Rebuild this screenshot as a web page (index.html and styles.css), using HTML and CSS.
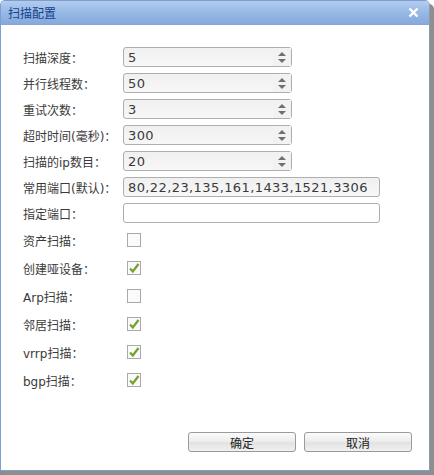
FILE: index.html
```html
<!DOCTYPE html>
<html lang="zh-CN">
<head>
    <meta charset="UTF-8">
    <title>扫描配置</title>
    <link rel="stylesheet" href="styles.css">
</head>
<body>
    <div class="window">
        <div class="window-header">
            <span class="window-title">扫描配置</span>
            <span class="window-close">
                <svg width="11" height="11" viewBox="0 0 11 11"><path d="M1.5 1.5 L9.5 9.5 M9.5 1.5 L1.5 9.5" stroke="#fff" stroke-width="2.4" fill="none"/></svg>
            </span>
        </div>
        <form class="window-body">
            <div class="fields">
                <div class="field"><label>扫描深度：</label><div class="spin"><input type="text" value="5"><span class="spin-btns"><i class="up"></i><i class="down"></i></span></div></div>
                <div class="field"><label>并行线程数：</label><div class="spin"><input type="text" value="50"><span class="spin-btns"><i class="up"></i><i class="down"></i></span></div></div>
                <div class="field"><label>重试次数：</label><div class="spin"><input type="text" value="3"><span class="spin-btns"><i class="up"></i><i class="down"></i></span></div></div>
                <div class="field"><label>超时时间(毫秒)：</label><div class="spin"><input type="text" value="300"><span class="spin-btns"><i class="up"></i><i class="down"></i></span></div></div>
                <div class="field"><label>扫描的ip数目：</label><div class="spin"><input type="text" value="20"><span class="spin-btns"><i class="up"></i><i class="down"></i></span></div></div>
                <div class="field"><label>常用端口(默认)：</label><input class="text wide" type="text" value="80,22,23,135,161,1433,1521,3306"></div>
                <div class="field"><label>指定端口：</label><input class="text wide plain" type="text" value=""></div>
            </div>
            <div class="checks">
                <div class="check-row"><label>资产扫描：</label><span class="check"></span></div>
                <div class="check-row"><label>创建哑设备：</label><span class="check checked"><svg width="12" height="12" viewBox="0 0 12 12"><path d="M2 6.5 L4.8 9.5 L10.5 2" stroke="#73a12a" stroke-width="2.2" fill="none"/></svg></span></div>
                <div class="check-row"><label>Arp扫描：</label><span class="check"></span></div>
                <div class="check-row"><label>邻居扫描：</label><span class="check checked"><svg width="12" height="12" viewBox="0 0 12 12"><path d="M2 6.5 L4.8 9.5 L10.5 2" stroke="#73a12a" stroke-width="2.2" fill="none"/></svg></span></div>
                <div class="check-row"><label>vrrp扫描：</label><span class="check checked"><svg width="12" height="12" viewBox="0 0 12 12"><path d="M2 6.5 L4.8 9.5 L10.5 2" stroke="#73a12a" stroke-width="2.2" fill="none"/></svg></span></div>
                <div class="check-row"><label>bgp扫描：</label><span class="check checked"><svg width="12" height="12" viewBox="0 0 12 12"><path d="M2 6.5 L4.8 9.5 L10.5 2" stroke="#73a12a" stroke-width="2.2" fill="none"/></svg></span></div>
            </div>
        </form>
        <div class="window-footer">
            <button type="button">确定</button>
            <button type="button">取消</button>
        </div>
    </div>
    <div class="behind">使用扫描&nbsp;&nbsp;&nbsp;不以仿秒)：</div>
</body>
</html>
```

FILE: styles.css
```css
body {
    margin: 0;
    padding: 0;
    background: #fff;
    font-family: "DejaVu Sans", "Noto Sans CJK SC", sans-serif;
    font-size: 12px;
    color: #333;
    overflow: hidden;
}

.window {
    box-sizing: border-box;
    width: 430px;
    height: 471px;
    display: flex;
    flex-direction: column;
    background: #fff;
    border: 1px solid #7d9fd0;
    border-right-color: #8a9bb4;
    border-radius: 5px 5px 0 0;
    box-shadow: 4px 4px 0 #8e8e8e;
    position: relative;
    z-index: 1;
}

.window-header {
    height: 23px;
    border-bottom: 1px solid #86a6d6;
    border-radius: 4px 4px 0 0;
    background: linear-gradient(#b2ccef, #98b9e5 50%, #86a9dc);
    display: flex;
    align-items: center;
    justify-content: space-between;
    padding: 0 10px 0 7px;
}

.window-title {
    font-family: "Noto Sans CJK SC", sans-serif;
    font-size: 12px;
    color: #15428b;
}

.window-close {
    display: flex;
    align-items: center;
}

.window-body {
    margin: 0;
    padding: 22px 0 0 22px;
}

.fields {
    display: flex;
    flex-direction: column;
    gap: 6px;
}

.field {
    display: flex;
    align-items: center;
    height: 20px;
}

.field label,
.check-row label {
    width: 100px;
    flex: none;
    color: #3a3a3a;
}

.spin {
    box-sizing: border-box;
    width: 169px;
    height: 20px;
    display: flex;
    border: 1px solid #aeaeae;
    border-radius: 3px;
    background: linear-gradient(#f0f0f0, #f7f7f7);
}

.spin input,
.text {
    box-sizing: border-box;
    border: none;
    outline: none;
    background: transparent;
    font-family: "DejaVu Sans", sans-serif;
    font-size: 13px;
    letter-spacing: 0.4px;
    color: #3a3a3a;
    padding: 0 0 0 4px;
    height: 18px;
}

.spin input {
    flex: 1;
    min-width: 0;
}

.spin-btns {
    width: 18px;
    display: flex;
    flex-direction: column;
    align-items: center;
    justify-content: center;
    gap: 3px;
    background: #f2f2f2;
}

.spin-btns i {
    width: 0;
    height: 0;
    border-left: 4px solid transparent;
    border-right: 4px solid transparent;
}

.spin-btns .up {
    border-bottom: 4px solid #707070;
}

.spin-btns .down {
    border-top: 4px solid #707070;
}

.text.wide {
    width: 257px;
    height: 20px;
    border: 1px solid #aeaeae;
    border-radius: 3px;
    background: linear-gradient(#f0f0f0, #f7f7f7);
}

.text.wide.plain {
    background: #fff;
}

.checks {
    margin-top: 3px;
    display: flex;
    flex-direction: column;
}

.check-row {
    height: 28px;
    display: flex;
    align-items: center;
}

.check {
    box-sizing: border-box;
    width: 14px;
    height: 14px;
    margin-left: 4px;
    border: 1px solid #a9a9a9;
    background: #fafafa;
    display: flex;
    align-items: center;
    justify-content: center;
}

.window-footer {
    margin-top: auto;
    display: flex;
    justify-content: flex-end;
    gap: 8px;
    padding: 0 17px 18px 0;
}

.window-footer button {
    width: 108px;
    height: 20px;
    border: 1px solid #9a9a9a;
    border-radius: 3px;
    background: linear-gradient(#fbfbfb, #ececec 50%, #e2e2e2 51%, #f0f0f0);
    font-family: "Noto Sans CJK SC", sans-serif;
    font-size: 12px;
    color: #222;
    padding: 0;
    cursor: pointer;
}

.behind {
    background: #8c8c8c;
    color: #444;
    padding: 0 0 0 4px;
    font-size: 12px;
    line-height: 14px;
    margin-top: -2px;
}
```
